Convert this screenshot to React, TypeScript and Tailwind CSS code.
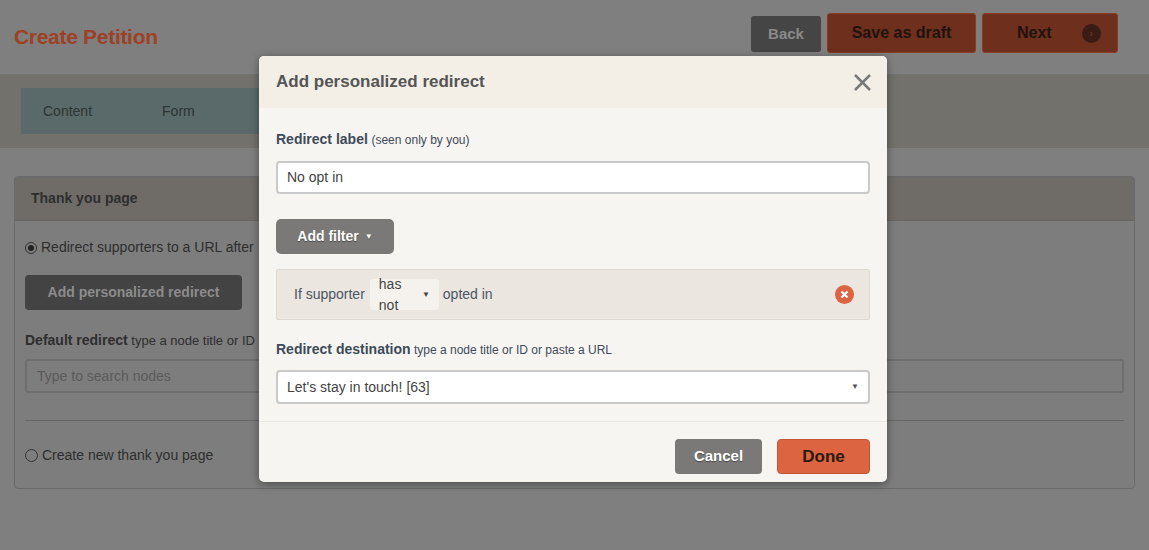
import React from "react";

export default function App() {
  const f = { fontFamily: "Arial, 'Liberation Sans', sans-serif" };
  return (
    <div style={f} className="relative w-[1149px] h-[550px] bg-[#7f7f7f] overflow-hidden text-[#333]">
      {/* header */}
      <div className="h-[74px] flex items-center justify-between pl-[14px] pr-[31px]">
        <div className="text-[21px] font-bold text-[#9c4125] tracking-[-0.3px]">Create Petition</div>
        <div className="flex gap-[6px] items-start -mt-[8px]">
          <div className="w-[70px] h-[36px] mt-[3px] rounded-[3px] bg-[#454545] text-[#8a8a8a] text-[15px] font-bold flex items-center justify-center">Back</div>
          <div className="w-[149px] h-[40px] rounded-[3px] bg-[#6e2f1d] border border-[#8e3a22] text-[#1e130f] text-[16px] font-bold flex items-center justify-center">Save as draft</div>
          <div className="w-[136px] h-[40px] rounded-[3px] bg-[#6e2f1d] border border-[#8e3a22] text-[#1e130f] text-[16px] font-bold flex items-center pl-[34px] gap-[30px]">Next
            <span className="w-[19px] h-[19px] rounded-full bg-[#3a1c14] text-[#6e2f1d] text-[11px] flex items-center justify-center">›</span>
          </div>
        </div>
      </div>
      <div className="h-[74px] bg-[#73716c] pt-[14px] px-[21px]">
        <div className="h-[46px] w-[300px] bg-[#5a6a6a] flex items-center text-[14px] text-[#2c3333]">
          <span className="ml-[22px]">Content</span>
          <span className="ml-[70px]">Form</span>
        </div>
      </div>
      {/* panel */}
      <div className="mx-[14px] mt-[28px] h-[313px] rounded-[4px] border border-[#6a6a6a] bg-[#7d7d7d]">
        <div className="h-[44px] bg-[#6f6c67] border-b border-[#666] flex items-center px-[16px] text-[14px] font-bold text-[#2e2e2e]">Thank you page</div>
        <div className="px-[10px] text-[14px] text-[#2e2e2e]">
          <div className="mt-[16px] flex items-center gap-[4px]"><span className="w-[12px] h-[12px] rounded-full border border-[#333] flex items-center justify-center"><span className="w-[6px] h-[6px] rounded-full bg-[#222]"/></span>Redirect supporters to a URL after</div>
          <div className="mt-[17px] w-[217px] h-[35px] rounded-[4px] bg-[#434343] text-[#8c8c8c] font-bold text-[14px] flex items-center justify-center">Add personalized redirect</div>
          <div className="mt-[20px] text-[13px]"><b className="text-[14px]">Default redirect</b> type a node title or ID</div>
          <div className="mt-[8px] h-[34px] rounded-[3px] border-2 border-[#6e6e6e] text-[#5a5a5a] flex items-center px-[10px]">Type to search nodes</div>
          <div className="mt-[27px] border-t border-[#666]" />
          <div className="mt-[24px] flex items-center gap-[4px]"><span className="w-[13px] h-[13px] rounded-full border border-[#333]"/>Create new thank you page</div>
        </div>
      </div>

      {/* modal */}
      <div className="absolute left-[259px] top-[56px] w-[628px] h-[426px] rounded-[5px] bg-[#f7f5f1] shadow-[0_2px_8px_rgba(0,0,0,0.4)] overflow-hidden">
        <div className="h-[52px] bg-[#f3efe7] flex items-center justify-between px-[17px]">
          <div className="text-[17px] font-bold text-[#555]">Add personalized redirect</div>
          <svg width="19" height="19" viewBox="0 0 19 19" className="mr-[-2px]"><path d="M2 2L17 17M17 2L2 17" stroke="#7a7a7a" strokeWidth="2.5"/></svg>
        </div>
        <div className="px-[17px]">
          <div className="mt-[21px] text-[13px] text-[#3d4a5a]"><b className="text-[14px] text-[#3d4a5a]">Redirect label</b> <span className="text-[12px]">(seen only by you)</span></div>
          <div className="mt-[11px] h-[33px] bg-white border-2 border-[#c9c9c9] rounded-[4px] flex items-center px-[9px] text-[14px] text-[#444]">No opt in</div>
          <div className="mt-[25px] w-[118px] h-[35px] rounded-[5px] bg-[#7a7977] text-white font-bold text-[14px] flex items-center justify-center gap-[6px] [text-shadow:0_1px_1px_rgba(0,0,0,0.4)]">Add filter <span className="text-[8px]">▼</span></div>
          <div className="mt-[15px] h-[51px] bg-[#ebe6df] border border-[#ddd8d0] rounded-[2px] flex items-center pl-[17px] pr-[15px] text-[14px] text-[#4a5566]">
            <span>If supporter</span>
            <span className="ml-[5px] h-[31px] w-[69px] bg-[#f5f2ed] rounded-[3px] flex items-center justify-between px-[9px] text-[#444]">has not<span className="text-[8px]">▼</span></span>
            <span className="ml-[4px]">opted in</span>
            <span className="ml-auto w-[19px] h-[19px] rounded-full bg-[#dd6443] text-white flex items-center justify-center">
              <svg width="9" height="9" viewBox="0 0 9 9"><path d="M1.5 1.5L7.5 7.5M7.5 1.5L1.5 7.5" stroke="white" strokeWidth="2.2"/></svg>
            </span>
          </div>
          <div className="mt-[19px] text-[12px] text-[#3d4a5a]"><b className="text-[14px]">Redirect destination</b> type a node title or ID or paste a URL</div>
          <div className="mt-[10px] h-[34px] bg-white border-2 border-[#c9c9c9] rounded-[4px] flex items-center justify-between px-[9px] text-[14px] text-[#444]">Let's stay in touch! [63]<span className="text-[8px] text-[#555]">▼</span></div>
        </div>
        <div className="mt-[17px] border-t border-[#ebe7e0] h-[70px] flex items-center justify-end gap-[15px] px-[17px]">
          <div className="w-[87px] h-[35px] rounded-[4px] bg-[#7a7977] text-white font-bold text-[15px] flex items-center justify-center [text-shadow:0_1px_1px_rgba(0,0,0,0.4)]">Cancel</div>
          <div className="w-[93px] h-[35px] rounded-[4px] bg-[#dc6441] border border-[#c45637] text-[#2a1810] font-bold text-[17px] flex items-center justify-center">Done</div>
        </div>
      </div>
    </div>
  );
}
